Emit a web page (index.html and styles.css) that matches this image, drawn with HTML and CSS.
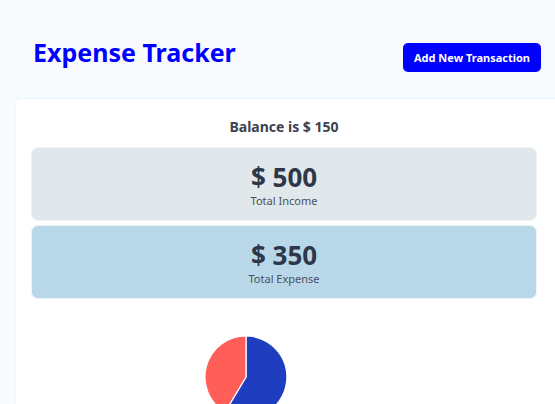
FILE: index.html
```html
<!DOCTYPE html>
<html>
<head>
<meta charset="utf-8">
<link rel="stylesheet" href="styles.css">
</head>
<body>
<header class="header">
  <h1 class="title">Expense Tracker</h1>
  <button class="add-btn">Add New Transaction</button>
</header>
<main class="card">
  <div class="balance">Balance is $ 150</div>
  <div class="stat income">
    <div class="amount">$ 500</div>
    <div class="label">Total Income</div>
  </div>
  <div class="stat expense">
    <div class="amount">$ 350</div>
    <div class="label">Total Expense</div>
  </div>
  <div class="chart">
    <svg width="84" height="84" viewBox="-42 -42 84 84">
      <path d="M0 0 L0 -41 A41 41 0 1 1 -21.1 35.2 Z" fill="#1f3dbf" stroke="#fff" stroke-width="1.2"/>
      <path d="M0 0 L-21.1 35.2 A41 41 0 0 1 0 -41 Z" fill="#ff5f58" stroke="#fff" stroke-width="1.2"/>
    </svg>
  </div>
</main>
</body>
</html>
```
FILE: styles.css
```css
html, body {
  margin: 0;
  padding: 0;
  background: #f8fafe;
  overflow: hidden;
  height: 404px;
  font-family: "Noto Sans", "Open Sans", sans-serif;
}
.header {
  display: flex;
  justify-content: space-between;
  align-items: flex-start;
  padding: 34px 14px 0 33px;
  height: 64px;
}
.title {
  margin: 0;
  color: #0000ff;
  font-size: 25px;
  font-weight: 700;
  line-height: 36px;
}
.add-btn {
  margin-top: 9px;
  background: #0000ff;
  color: #fff;
  border: none;
  border-radius: 5px;
  font-family: inherit;
  font-weight: 700;
  font-size: 11px;
  height: 29px;
  padding: 0;
  width: 138px;
  white-space: nowrap;
}
.card {
  margin-left: 15px;
  width: 560px;
  height: 330px;
  background: #fff;
  border: 1px solid #e3fdff;
  border-radius: 6px;
  padding: 18px 0 0 15px;
  box-sizing: border-box;
}
.balance {
  width: 506px;
  text-align: center;
  font-weight: 700;
  font-size: 14px;
  color: #3b4252;
  line-height: 20px;
  margin-bottom: 10px;
}
.stat {
  width: 506px;
  height: 74px;
  border-radius: 7px;
  border: 1px solid #eef3f6;
  box-sizing: border-box;
  display: flex;
  flex-direction: column;
  align-items: center;
  color: #2d3748;
  margin-bottom: 4px;
}
.income { background: #e0e8eb; }
.expense { background: #b8d8ea; }
.amount {
  font-weight: 700;
  font-size: 26px;
  line-height: 28px;
  margin-top: 15px;
}
.label {
  font-size: 11px;
  line-height: 14px;
  margin-top: 3px;
  color: #4a5060;
}
.chart {
  margin-top: 36px;
  padding-left: 173px;
}
.chart svg { display: block; }
```
